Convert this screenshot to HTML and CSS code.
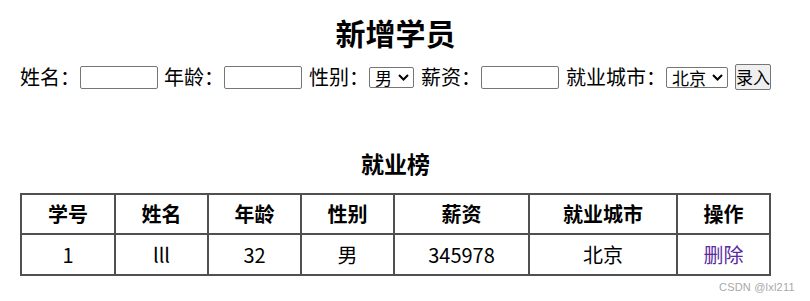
FILE: index.html
```html
<!DOCTYPE html>
<html lang="zh-CN">
<head>
<meta charset="utf-8">
<title>新增学员</title>
<link rel="stylesheet" href="styles.css">
</head>
<body>
<div class="page">
  <h2 class="title">新增学员</h2>
  <form class="form">
    <span class="label">姓名：</span><input class="field" type="text">
    <span class="label gap6">年龄：</span><input class="field" type="text">
    <span class="label gap7">性别：</span>
    <span class="selwrap sel-sex">
      <select class="sel"><option>男</option><option>女</option></select>
      <svg class="chev" width="11" height="7" viewBox="0 0 11 7"><path d="M1 1 L5.5 5.5 L10 1" fill="none" stroke="#000" stroke-width="2"/></svg>
    </span>
    <span class="label gap7">薪资：</span><input class="field" type="text">
    <span class="label gap7">就业城市：</span>
    <span class="selwrap sel-city">
      <select class="sel"><option>北京</option><option>上海</option></select>
      <svg class="chev" width="11" height="7" viewBox="0 0 11 7"><path d="M1 1 L5.5 5.5 L10 1" fill="none" stroke="#000" stroke-width="2"/></svg>
    </span>
    <button class="btn gap7" type="button">录入</button>
  </form>
  <h3 class="subtitle">就业榜</h3>
  <table class="rank">
    <colgroup>
      <col class="c94"><col class="c93"><col class="c93"><col class="c93"><col class="c135"><col class="c148"><col class="c93">
    </colgroup>
    <thead>
      <tr><th>学号</th><th>姓名</th><th>年龄</th><th>性别</th><th>薪资</th><th>就业城市</th><th>操作</th></tr>
    </thead>
    <tbody>
      <tr><td>1</td><td>lll</td><td>32</td><td>男</td><td>345978</td><td>北京</td><td><a class="del" href="#">删除</a></td></tr>
    </tbody>
  </table>
</div>
<div class="watermark">CSDN @lxl211</div>
</body>
</html>
```
FILE: styles.css
```css
html, body {
  margin: 0;
  padding: 0;
  background: #fff;
}
body {
  font-family: "Noto Sans CJK SC", "Noto Sans", sans-serif;
  color: #000;
  position: relative;
  width: 810px;
  height: 301px;
  overflow: hidden;
}
.page {
  padding: 0 29px 0 10px;
}
.title {
  margin: 12px 0 0;
  font-size: 30px;
  line-height: 40px;
  font-weight: 700;
  text-align: center;
}
.form {
  margin: 10px 0 0;
  height: 30px;
  display: flex;
  align-items: center;
  justify-content: center;
  font-size: 20px;
}
.label {
  font-size: 20px;
  line-height: 30px;
  white-space: nowrap;
}
.gap6 { margin-left: 6px; }
.gap7 { margin-left: 7px; }
.field {
  box-sizing: border-box;
  width: 78px;
  height: 23px;
  margin: 0;
  padding: 1px 2px;
  border: 1px solid #767676;
  border-radius: 2px;
  background: #fff;
  font-size: 16px;
}
.selwrap {
  position: relative;
  display: block;
  height: 21px;
}
.sel-sex { width: 45px; }
.sel-city { width: 62px; }
.sel {
  -webkit-appearance: none;
  appearance: none;
  box-sizing: border-box;
  display: block;
  width: 100%;
  height: 21px;
  margin: 0;
  padding: 0 0 0 5px;
  border: 1px solid #767676;
  border-radius: 2px;
  background: #fff;
  font-family: "Noto Sans CJK SC", sans-serif;
  font-size: 17px;
  line-height: 19px;
  color: #000;
  overflow: visible;
}
.chev {
  position: absolute;
  right: 5px;
  top: 7px;
  pointer-events: none;
}
.btn {
  box-sizing: border-box;
  width: 36px;
  height: 26px;
  padding: 0;
  border: 1px solid #767676;
  border-radius: 2px;
  background: #efefef;
  font-family: "Noto Sans CJK SC", sans-serif;
  font-size: 17px;
  line-height: 24px;
  color: #000;
}
.subtitle {
  margin: 55px 0 0;
  font-size: 23px;
  line-height: 32px;
  font-weight: 700;
  text-align: center;
}
.rank {
  margin: 14px auto 0;
  width: 751px;
  table-layout: fixed;
  border-collapse: collapse;
  border: 2px solid #505050;
  font-size: 20px;
}
.c94 { width: 94px; }
.c93 { width: 93px; }
.c135 { width: 135px; }
.c148 { width: 148px; }
.rank th, .rank td {
  border: 2px solid #505050;
  padding: 0;
  text-align: center;
  line-height: 28px;
}
.rank th {
  height: 38px;
  font-weight: 700;
}
.rank td {
  height: 39px;
  font-weight: 400;
}
.del {
  color: #5a2aa0;
  text-decoration: none;
}
.watermark {
  position: absolute;
  left: 719px;
  top: 281px;
  font-family: "Liberation Sans", Arial, sans-serif;
  font-size: 11px;
  line-height: 13px;
  color: #a8a8a8;
  letter-spacing: 0.2px;
}
```
